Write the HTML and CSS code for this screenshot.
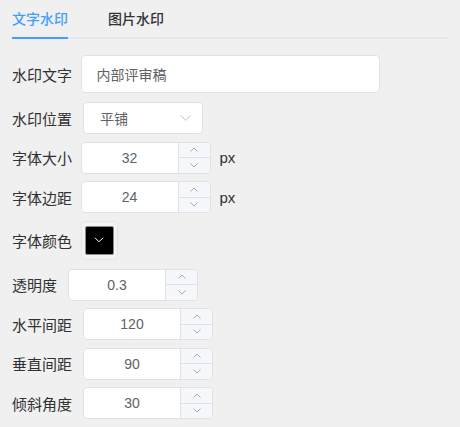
FILE: index.html
```html
<!DOCTYPE html>
<html lang="zh-CN">
<head>
<meta charset="utf-8">
<title>水印设置</title>
<link rel="stylesheet" href="styles.css">
</head>
<body>
<div class="page">
  <div class="tabs">
    <div class="tab active">文字水印</div>
    <div class="tab">图片水印</div>
  </div>

  <div class="form">
    <div class="row row-text">
      <span class="label">水印文字</span>
      <div class="input wide"><span class="val">内部评审稿</span></div>
    </div>

    <div class="row row-select">
      <span class="label gap-l">水印位置</span>
      <div class="input select">
        <span class="val">平铺</span>
        <svg class="chev" width="11" height="6" viewBox="0 0 11 6"><path d="M0.5 0.5 L5.5 5.2 L10.5 0.5" fill="none" stroke="#c0c4cc" stroke-width="1"/></svg>
      </div>
    </div>

    <div class="row">
      <span class="label">字体大小</span>
      <div class="num">
        <span class="num-val">32</span>
        <div class="steps">
          <div class="step"><svg width="8" height="5" viewBox="0 0 8 5"><path d="M0.5 4.5 L4 1 L7.5 4.5" fill="none" stroke="#a8abb2" stroke-width="1"/></svg></div>
          <div class="step down"><svg width="8" height="5" viewBox="0 0 8 5"><path d="M0.5 0.5 L4 4 L7.5 0.5" fill="none" stroke="#a8abb2" stroke-width="1"/></svg></div>
        </div>
      </div>
      <span class="unit">px</span>
    </div>

    <div class="row">
      <span class="label">字体边距</span>
      <div class="num">
        <span class="num-val">24</span>
        <div class="steps">
          <div class="step"><svg width="8" height="5" viewBox="0 0 8 5"><path d="M0.5 4.5 L4 1 L7.5 4.5" fill="none" stroke="#a8abb2" stroke-width="1"/></svg></div>
          <div class="step down"><svg width="8" height="5" viewBox="0 0 8 5"><path d="M0.5 0.5 L4 4 L7.5 0.5" fill="none" stroke="#a8abb2" stroke-width="1"/></svg></div>
        </div>
      </div>
      <span class="unit">px</span>
    </div>

    <div class="row row-color">
      <span class="label">字体颜色</span>
      <div class="picker">
        <div class="swatch">
          <svg width="10" height="6" viewBox="0 0 10 6"><path d="M1 0.8 L5 4.8 L9 0.8" fill="none" stroke="#ffffff" stroke-width="1"/></svg>
        </div>
      </div>
    </div>

    <div class="row row-alpha">
      <span class="label gap-l">透明度</span>
      <div class="num">
        <span class="num-val">0.3</span>
        <div class="steps">
          <div class="step"><svg width="8" height="5" viewBox="0 0 8 5"><path d="M0.5 4.5 L4 1 L7.5 4.5" fill="none" stroke="#a8abb2" stroke-width="1"/></svg></div>
          <div class="step down"><svg width="8" height="5" viewBox="0 0 8 5"><path d="M0.5 0.5 L4 4 L7.5 0.5" fill="none" stroke="#a8abb2" stroke-width="1"/></svg></div>
        </div>
      </div>
    </div>

    <div class="row">
      <span class="label gap-l">水平间距</span>
      <div class="num">
        <span class="num-val">120</span>
        <div class="steps">
          <div class="step"><svg width="8" height="5" viewBox="0 0 8 5"><path d="M0.5 4.5 L4 1 L7.5 4.5" fill="none" stroke="#a8abb2" stroke-width="1"/></svg></div>
          <div class="step down"><svg width="8" height="5" viewBox="0 0 8 5"><path d="M0.5 0.5 L4 4 L7.5 0.5" fill="none" stroke="#a8abb2" stroke-width="1"/></svg></div>
        </div>
      </div>
    </div>

    <div class="row">
      <span class="label gap-l">垂直间距</span>
      <div class="num">
        <span class="num-val">90</span>
        <div class="steps">
          <div class="step"><svg width="8" height="5" viewBox="0 0 8 5"><path d="M0.5 4.5 L4 1 L7.5 4.5" fill="none" stroke="#a8abb2" stroke-width="1"/></svg></div>
          <div class="step down"><svg width="8" height="5" viewBox="0 0 8 5"><path d="M0.5 0.5 L4 4 L7.5 0.5" fill="none" stroke="#a8abb2" stroke-width="1"/></svg></div>
        </div>
      </div>
    </div>

    <div class="row">
      <span class="label gap-l">倾斜角度</span>
      <div class="num">
        <span class="num-val">30</span>
        <div class="steps">
          <div class="step"><svg width="8" height="5" viewBox="0 0 8 5"><path d="M0.5 4.5 L4 1 L7.5 4.5" fill="none" stroke="#a8abb2" stroke-width="1"/></svg></div>
          <div class="step down"><svg width="8" height="5" viewBox="0 0 8 5"><path d="M0.5 0.5 L4 4 L7.5 0.5" fill="none" stroke="#a8abb2" stroke-width="1"/></svg></div>
        </div>
      </div>
    </div>
  </div>
</div>
</body>
</html>
```

FILE: styles.css
```css
html, body {
  margin: 0;
  padding: 0;
  background: #f0f0f0;
}

body {
  font-family: "Liberation Sans", "Noto Sans CJK SC", sans-serif;
  color: #303133;
}

.page {
  padding: 0 12px;
  width: 436px;
}

.tabs {
  display: flex;
  gap: 40px;
  height: 37px;
  border-bottom: 2px solid #e4e7ed;
}

.tab {
  font-family: "Noto Sans CJK SC", sans-serif;
  font-size: 14px;
  font-weight: 500;
  line-height: 37px;
  color: #303133;
}

.tab.active {
  color: #409eff;
  border-bottom: 2px solid #409eff;
  margin-bottom: -2px;
}

.form {
  display: flex;
  flex-direction: column;
  gap: 7.5px;
  padding-top: 16px;
}

.row {
  display: flex;
  align-items: center;
}

.row-text {
  margin-bottom: 1.5px;
}

.row-color {
  margin-bottom: 1.5px;
}

.label {
  font-family: "Noto Sans CJK SC", sans-serif;
  font-size: 15px;
  color: #303133;
  margin-right: 8.5px;
  white-space: nowrap;
}

.label.gap-l {
  margin-right: 11px;
}

.input {
  box-sizing: border-box;
  background: #ffffff;
  border: 1px solid #dfe1e6;
  border-radius: 4px;
  display: flex;
  align-items: center;
}

.input .val {
  font-family: "Noto Sans CJK SC", sans-serif;
  font-size: 14px;
  color: #606266;
}

.wide {
  width: 299px;
  height: 38px;
  padding-left: 15px;
}

.select {
  width: 120px;
  height: 32px;
  padding: 0 11px 0 16px;
  justify-content: space-between;
}

.chev {
  display: block;
}

.num {
  box-sizing: border-box;
  width: 130px;
  height: 32px;
  background: #ffffff;
  border: 1px solid #dfe1e6;
  border-radius: 4px;
  display: flex;
  overflow: hidden;
}

.num-val {
  flex: 1;
  text-align: center;
  font-family: "Liberation Sans", sans-serif;
  font-size: 14px;
  color: #606266;
  line-height: 30px;
}

.steps {
  width: 31px;
  border-left: 1px solid #dfe1e6;
  background: #f5f7fa;
  display: flex;
  flex-direction: column;
}

.step {
  flex: 1;
  display: flex;
  align-items: center;
  justify-content: center;
}

.step svg {
  display: block;
}

.step.down {
  border-top: 1px solid #dfe1e6;
}

.unit {
  font-family: "Liberation Sans", sans-serif;
  font-size: 15px;
  color: #303133;
  margin-left: 9px;
}

.picker {
  box-sizing: border-box;
  width: 37px;
  height: 39px;
  border: 1px solid #e6e6e6;
  border-radius: 4px;
  background: #f3f3f3;
  padding: 4px 3px;
}

.swatch {
  box-sizing: border-box;
  width: 100%;
  height: 100%;
  background: #000000;
  border: 1px solid #8a8a8a;
  border-radius: 2px;
  display: flex;
  align-items: center;
  justify-content: center;
}

.swatch svg {
  display: block;
}
```
